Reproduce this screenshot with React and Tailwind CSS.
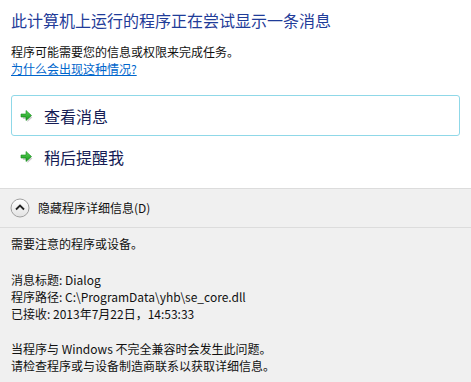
import React from "react";

const Arrow = () => (
  <svg width="14" height="13" viewBox="0 0 14 13" className="shrink-0">
    <defs>
      <linearGradient id="ag" x1="0" y1="0" x2="0" y2="1">
        <stop offset="0" stopColor="#5fd05a" />
        <stop offset="1" stopColor="#139a1a" />
      </linearGradient>
    </defs>
    <path d="M2 6.5h4.5V3l5 4.5-5 4.5V9H2z" fill="#000" opacity="0.2" transform="translate(0.9 0.9)" />
    <path d="M1 5h5V1.5l5.5 5-5.5 5V8H1z" fill="url(#ag)" stroke="#0e8a14" strokeWidth="0.6" />
  </svg>
);

const Chevron = () => (
  <svg width="20" height="20" viewBox="0 0 20 20" className="shrink-0">
    <defs>
      <linearGradient id="cg" x1="0" y1="0" x2="0" y2="1">
        <stop offset="0" stopColor="#ffffff" />
        <stop offset="1" stopColor="#e2e2e2" />
      </linearGradient>
    </defs>
    <circle cx="10" cy="10" r="9" fill="url(#cg)" stroke="#a0a0a0" strokeWidth="1" />
    <path d="M6 11.5l4-4 4 4" fill="none" stroke="#222" strokeWidth="1.8" />
  </svg>
);

export default function App() {
  return (
    <div
      className="w-[471px] h-[382px] bg-white flex flex-col overflow-hidden text-[#111]"
      style={{ fontFamily: '"Noto Sans CJK SC", "Noto Sans", sans-serif' }}
    >
      <div className="px-[11px] pt-[9px]">
        <div className="text-[16px] leading-[22px] text-[#1f3c99]">
          此计算机上运行的程序正在尝试显示一条消息
        </div>
        <div className="mt-[12px] text-[12px] leading-[17px]">
          程序可能需要您的信息或权限来完成任务。
        </div>
        <div className="text-[12px] leading-[17px] text-[#0066cc] underline">
          为什么会出现这种情况?
        </div>
        <div className="mt-[18px] flex flex-col">
          <div className="h-[41px] border border-[#8fd8e8] rounded-[3px] flex items-center pl-[8px] gap-[10px] text-[16px] text-[#151c55]">
            <Arrow />
            <span>查看消息</span>
          </div>
          <div className="h-[41px] border border-transparent flex items-center pl-[8px] gap-[10px] text-[16px] text-[#151c55]">
            <Arrow />
            <span>稍后提醒我</span>
          </div>
        </div>
      </div>
      <div className="mt-[11px] flex-1 bg-[#f0f0f0] border-t border-[#dcdcdc]">
        <div className="h-[39px] flex items-center pl-[10px] gap-[8px] border-b border-[#dcdcdc] text-[12px]">
          <Chevron />
          <span>隐藏程序详细信息(D)</span>
        </div>
        <div className="px-[11px] pt-[7px] text-[12px] leading-[17px]">
          <div>需要注意的程序或设备。</div>
          <div className="mt-[19px]">消息标题: Dialog</div>
          <div>程序路径: C:\ProgramData\yhb\se_core.dll</div>
          <div>已接收: 2013年7月22日，14:53:33</div>
          <div className="mt-[18px]">当程序与 Windows 不完全兼容时会发生此问题。</div>
          <div>请检查程序或与设备制造商联系以获取详细信息。</div>
        </div>
      </div>
    </div>
  );
}
